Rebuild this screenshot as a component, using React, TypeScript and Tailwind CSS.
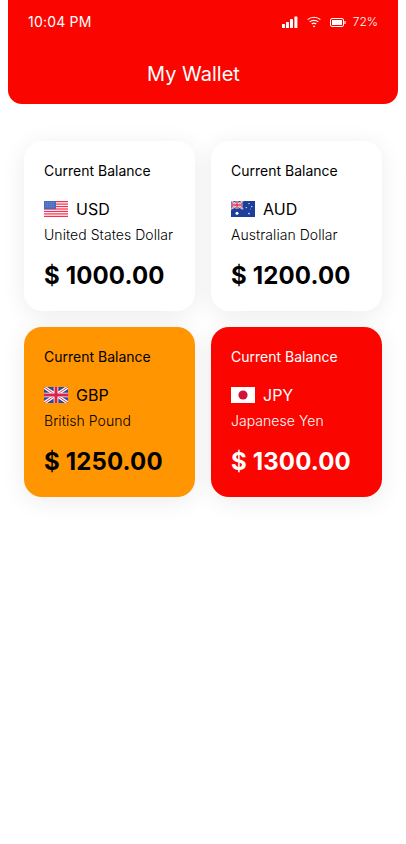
const cards = [
  { code: "USD", name: "United States Dollar", amount: "1000.00", bg: "bg-white", text: "text-black", flag: "us" },
  { code: "AUD", name: "Australian Dollar", amount: "1200.00", bg: "bg-white", text: "text-black", flag: "au" },
  { code: "GBP", name: "British Pound", amount: "1250.00", bg: "bg-[#ff9500]", text: "text-black", flag: "gb" },
  { code: "JPY", name: "Japanese Yen", amount: "1300.00", bg: "bg-[#fb0500]", text: "text-white", flag: "jp" },
];

function Flag({ kind }: { kind: string }) {
  if (kind === "us") {
    return (
      <svg width="24" height="16" viewBox="0 0 24 16" className="shrink-0">
        <rect width="24" height="16" fill="#fff" />
        {[0, 2.46, 4.92, 7.38, 9.84, 12.3, 14.76].map((y) => (
          <rect key={y} y={y} width="24" height="1.23" fill="#f0304e" />
        ))}
        <rect width="12" height="8.2" fill="#4468bd" />
        {[1.5, 3.5, 5.5, 7.5, 9.5].flatMap((x) =>
          [1.5, 3.5, 5.5].map((y) => <rect key={`${x}-${y}`} x={x} y={y} width="0.7" height="0.7" fill="#cfd8f2" />)
        )}
      </svg>
    );
  }
  if (kind === "au") {
    return (
      <svg width="24" height="16" viewBox="0 0 24 16" className="shrink-0">
        <rect width="24" height="16" fill="#1b3f9b" />
        <rect width="12" height="8" fill="#2a4a9e" />
        <path d="M0 0L12 8M12 0L0 8" stroke="#fff" strokeWidth="1.8" />
        <path d="M0 0L12 8M12 0L0 8" stroke="#e0324e" strokeWidth="0.7" />
        <path d="M6 0V8M0 4H12" stroke="#fff" strokeWidth="2.6" />
        <path d="M6 0V8M0 4H12" stroke="#e0324e" strokeWidth="1.4" />
        <circle cx="6" cy="12.2" r="1.5" fill="#fff" />
        <circle cx="18" cy="2.6" r="0.7" fill="#fff" />
        <circle cx="18" cy="12.6" r="0.8" fill="#fff" />
        <circle cx="15.3" cy="6.6" r="0.7" fill="#fff" />
        <circle cx="20.8" cy="5.6" r="0.7" fill="#fff" />
        <circle cx="19.4" cy="8" r="0.4" fill="#fff" />
      </svg>
    );
  }
  if (kind === "gb") {
    return (
      <svg width="24" height="16" viewBox="0 0 24 16" className="shrink-0">
        <rect width="24" height="16" fill="#2a4a9e" />
        <path d="M0 0L24 16M24 0L0 16" stroke="#fff" strokeWidth="3.2" />
        <path d="M0 0L24 16M24 0L0 16" stroke="#e0324e" strokeWidth="1" />
        <path d="M12 0V16M0 8H24" stroke="#fff" strokeWidth="4.6" />
        <path d="M12 0V16M0 8H24" stroke="#dc2347" strokeWidth="3" />
      </svg>
    );
  }
  return (
    <svg width="24" height="16" viewBox="0 0 24 16" className="shrink-0">
      <rect width="24" height="16" fill="#fff" />
      <circle cx="12" cy="8" r="4.6" fill="#d3123c" />
    </svg>
  );
}

export default function App() {
  return (
    <div className="min-h-[844px] bg-white font-['Inter',sans-serif]">
      <header className="mx-2 h-[104px] rounded-b-[14px] bg-[#fb0500] text-white">
        <div className="flex h-11 items-center justify-between pl-5 pr-5">
          <span className="text-[14px] leading-none tracking-[0.2px]">10:04 PM</span>
          <div className="flex items-center">
            <svg width="16" height="12" viewBox="0 0 16 12" fill="#fff">
              <rect x="0" y="8" width="3" height="4" rx="0.5" />
              <rect x="4" y="6" width="3" height="6" rx="0.5" />
              <rect x="8" y="3" width="3" height="9" rx="0.5" />
              <rect x="12.4" y="0.5" width="3" height="11.5" rx="0.5" />
            </svg>
            <svg width="14" height="12" viewBox="0 0 14 12" fill="none" stroke="#fff" strokeWidth="1.1" className="ml-[9px]">
              <path d="M0.6 3.6C4.2 0.4 9.8 0.4 13.4 3.6" />
              <path d="M2.6 5.9C5 3.8 9 3.8 11.4 5.9" />
              <path d="M4.7 8C6 7 8 7 9.3 8" />
              <circle cx="7" cy="10.3" r="0.9" fill="#fff" stroke="none" />
            </svg>
            <svg width="16" height="9" viewBox="0 0 16 9" className="ml-[9px]">
              <rect x="0.5" y="0.5" width="13" height="8" rx="1.5" fill="none" stroke="#fff" />
              <rect x="2" y="2" width="10" height="5" fill="#fff" />
              <rect x="14.4" y="3" width="1.2" height="3" fill="#fff" />
            </svg>
            <span className="ml-[7px] text-[12px] font-light leading-none">72%</span>
          </div>
        </div>
        <h1 className="mt-[15px] pl-[139px] text-[20px] font-normal leading-[30px]">My Wallet</h1>
      </header>
      <main className="grid grid-cols-[171px_171px] gap-4 px-6 pt-[37px]">
        {cards.map((c) => (
          <div
            key={c.code}
            className={`h-[170px] rounded-[18px] px-5 pt-[21px] shadow-[0_4px_24px_rgba(0,0,0,0.08)] ${c.bg} ${c.text}`}
          >
            <p className="text-[14px] leading-[18px]">Current Balance</p>
            <div className="mt-[20px] flex h-[18px] items-center gap-2">
              <Flag kind={c.flag} />
              <span className="text-[16px] leading-[18px]">{c.code}</span>
            </div>
            <p className="mt-[8px] whitespace-nowrap text-[14px] font-light leading-[18px] tracking-[0.05px]">{c.name}</p>
            <p className="mt-[17px] text-[24px] font-bold leading-[30px] tracking-[0.15px]">$ {c.amount}</p>
          </div>
        ))}
      </main>
    </div>
  );
}
